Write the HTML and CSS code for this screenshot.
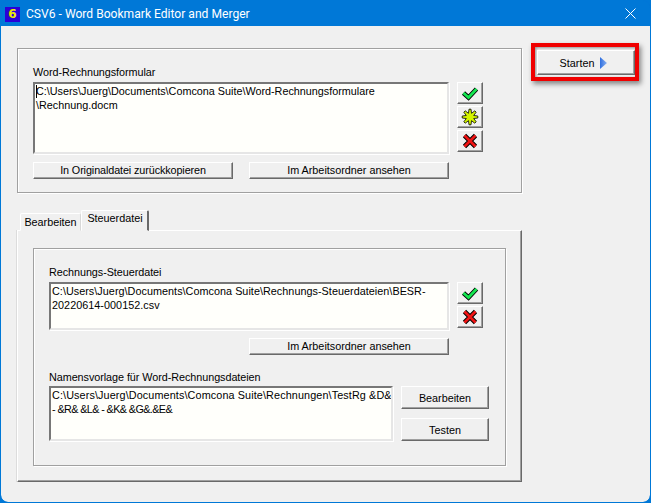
FILE: index.html
```html
<!DOCTYPE html>
<html lang="de">
<head>
<meta charset="utf-8">
<title>CSV6 - Word Bookmark Editor and Merger</title>
<link rel="stylesheet" href="styles.css">
</head>
<body>
<div class="window">
  <header class="titlebar">
    <span class="app-icon">6</span>
    <span class="title">CSV6 - Word Bookmark Editor and Merger</span>
    <svg class="close" width="11" height="11" viewBox="0 0 11 11"><path d="M.5.5l10 10M10.5.5l-10 10" stroke="#fff" stroke-width="1" fill="none"/></svg>
  </header>
  <main class="client">
    <div class="left">
      <section class="group top-group">
        <div class="label">Word-Rechnungsformular</div>
        <div class="field-row">
          <div class="textbox tb-top"><span class="caret"></span>C:\Users\Juerg\Documents\Comcona Suite\Word-Rechnungsformulare<br>\Rechnung.docm</div>
          <div class="icons">
            <button class="btn icon-btn"><svg width="18" height="16" viewBox="0 0 18 16"><path class="out" d="M2.5 8l5 4.5 8-8.5"/><path class="check" d="M2.5 8l5 4.5 8-8.5"/></svg></button>
            <button class="btn icon-btn"><svg width="18" height="18" viewBox="0 0 18 18"><path class="star-shape" d="M8 1.2h2l.53 4.1 3.27-2.5 1.4 1.4-2.5 3.27 4.1.53v2l-4.1.53 2.5 3.27-1.4 1.4-3.27-2.5-.53 4.1H8l-.53-4.1-3.27 2.5-1.4-1.4 2.5-3.27-4.1-.53V8l4.1-.53-2.5-3.27 1.4-1.4 3.27 2.5z"/></svg></button>
            <button class="btn icon-btn"><svg width="18" height="18" viewBox="0 0 18 18"><path class="out" d="M3.5 3.5l11 11M14.5 3.5l-11 11"/><path class="cross" d="M3.5 3.5l11 11M14.5 3.5l-11 11"/></svg></button>
          </div>
        </div>
        <div class="btn-row">
          <button class="btn wide tight">In Originaldatei zurückkopieren</button>
          <button class="btn wide">Im Arbeitsordner ansehen</button>
        </div>
      </section>

      <div class="tabs">
        <div class="tab">Bearbeiten</div>
        <div class="tab active">Steuerdatei</div>
      </div>
      <section class="panel">
        <div class="group inner-group">
          <div class="label">Rechnungs-Steuerdatei</div>
          <div class="field-row">
            <div class="textbox tb-ctrl">C:\Users\Juerg\Documents\Comcona Suite\Rechnungs-Steuerdateien\BESR-<br>20220614-000152.csv</div>
            <div class="icons">
              <button class="btn icon-btn"><svg width="18" height="16" viewBox="0 0 18 16"><path class="out" d="M2.5 8l5 4.5 8-8.5"/><path class="check" d="M2.5 8l5 4.5 8-8.5"/></svg></button>
              <button class="btn icon-btn"><svg width="18" height="18" viewBox="0 0 18 18"><path class="out" d="M3.5 3.5l11 11M14.5 3.5l-11 11"/><path class="cross" d="M3.5 3.5l11 11M14.5 3.5l-11 11"/></svg></button>
            </div>
          </div>
          <div class="btn-row end-row">
            <button class="btn wide">Im Arbeitsordner ansehen</button>
          </div>
          <div class="label second-label">Namensvorlage für Word-Rechnungsdateien</div>
          <div class="field-row">
            <div class="textbox tb-name"><span class="name-a">C:\Users\Juerg\Documents\Comcona Suite\Rechnungen\TestRg &amp;D&amp;</span><br><span class="name-b">- &amp;R&amp; &amp;L&amp; - &amp;K&amp; &amp;G&amp;.&amp;E&amp;</span></div>
            <div class="side-btns">
              <button class="btn side">Bearbeiten</button>
              <button class="btn side">Testen</button>
            </div>
          </div>
        </div>
      </section>
    </div>
    <aside class="right">
      <div class="highlight">
        <button class="btn start">Starten<svg class="play" width="7" height="12" viewBox="0 0 7 12"><defs><linearGradient id="pl" x1="0" y1="0" x2="1" y2="0"><stop offset="0" stop-color="#2f6fe0"/><stop offset="1" stop-color="#8ab0ee"/></linearGradient></defs><path d="M0 0l7 6-7 6z" fill="url(#pl)"/></svg></button>
      </div>
    </aside>
  </main>
</div>
</body>
</html>
```
FILE: styles.css
```css
* { box-sizing: border-box; }
html, body { margin: 0; padding: 0; background: #0078d7; }
body { width: 651px; height: 503px; overflow: hidden; font-family: "Liberation Sans", Arial, sans-serif; font-size: 10.8px; color: #000; }

.window { width: 651px; height: 503px; display: flex; flex-direction: column; border: 1px solid #0078d7; border-radius: 8px; background: #0078d7; overflow: hidden; }

.titlebar { flex: none; height: 25px; background: #0078d7; display: flex; align-items: center; padding: 0 14px 0 4px; color: #fff; }
.app-icon { width: 15px; height: 15px; margin-top: 1px; background: #2a00d8; color: #ecec00; font-family: "DejaVu Sans", sans-serif; font-weight: 700; font-size: 12px; line-height: 15px; text-align: center; }
.title { margin-left: 6px; font-family: Roboto, "Liberation Sans", sans-serif; font-size: 12.1px; flex: 1; }
.close { flex: none; }

.client { flex: 1; background: #f0f0f0; display: flex; align-items: flex-start; padding: 22px 0 0 16px; border-radius: 0 0 7px 7px; }
.left { width: 505px; flex: none; }
.right { margin-left: 9px; margin-top: -5px; }

.group { border: 1px solid #a0a0a0; box-shadow: inset 1px 1px 0 #fff, 1px 1px 0 #fff; }
.top-group { height: 145px; padding: 17px 15px 0; }
.label { height: 16px; line-height: 13px; white-space: nowrap; letter-spacing: -.05px; }
.field-row { display: flex; align-items: flex-start; }

.textbox { background: #fffffb; border: 2px solid; border-color: #777 #e6e6e6 #e6e6e6 #777; box-shadow: 1px 1px 0 #fff; padding: 0 1px; line-height: 14px; white-space: nowrap; overflow: hidden; }
.tb-top { width: 416px; height: 72px; position: relative; }
.tb-ctrl { width: 400px; height: 48px; letter-spacing: .04px; }
.tb-name { width: 344px; height: 55px; }
.name-a { letter-spacing: .12px; }
.name-b { letter-spacing: -.6px; }
.caret { position: absolute; left: 1px; top: 1px; width: 1px; height: 13px; background: #000; }

.btn { display: block; margin: 0; padding: 0; font: inherit; color: #000; background: #f0f0f0; border: 1px solid; border-color: #fff #696969 #696969 #fff; box-shadow: inset -1px -1px 0 #a0a0a0; text-align: center; }
.icons { margin-left: 8px; display: flex; flex-direction: column; gap: 2px; }
.icon-btn { width: 26px; height: 22px; display: flex; align-items: center; justify-content: center; }
.icon-btn svg { display: block; }
.out, .check, .cross { fill: none; stroke-linecap: butt; stroke-linejoin: miter; }
.out { stroke: #000; stroke-width: 4.6; }
.check { stroke: #14e650; stroke-width: 2.8; }
.cross { stroke: #f01414; stroke-width: 2.8; }
.star-shape { fill: #d4f400; stroke: #000; stroke-width: .8; }

.btn-row { display: flex; gap: 16px; margin-top: 8px; }
.wide { width: 200px; height: 17px; line-height: 14px; padding-bottom: 1px; }
.tight { letter-spacing: -.1px; }
.end-row { justify-content: flex-end; width: 400px; }

.tabs { display: flex; align-items: flex-end; height: 22px; margin-top: 16px; padding-left: 3px; position: relative; z-index: 1; }
.tab { height: 18px; width: 61px; padding-top: 2px; text-align: center; border: 1px solid; border-color: #fff #d8d8d8 transparent #fff; background: #f0f0f0; border-radius: 2px 2px 0 0; }
.tab.active { height: 21px; width: 68px; padding: 1px 0 0 1px; border-right: 2px solid #696969; border-color: #fff #696969 #f0f0f0 #fff; }

.panel { height: 252px; margin-top: -1px; border: 1px solid; border-color: #fff #696969 #696969 #fff; box-shadow: inset -1px -1px 0 #a0a0a0, -1px 0 0 #dcdcdc; padding: 17px 15px 0; }
.inner-group { height: 218px; padding: 17px 15px 0; }
.second-label { margin-top: 16px; height: 15px; }

.side-btns { margin-left: 8px; display: flex; flex-direction: column; gap: 9px; }
.side { width: 88px; height: 23px; }

.highlight { width: 108px; height: 38px; border: 4px solid #f00000; padding: 3px 1px 2px 2px; box-shadow: 2px 3px 5px rgba(0,0,0,.45), inset 1px 1px 3px rgba(0,0,0,.4); }
.start { width: 98px; height: 25px; display: flex; align-items: center; justify-content: center; gap: 6px; padding-right: 5px; }
.play { flex: none; }
```
